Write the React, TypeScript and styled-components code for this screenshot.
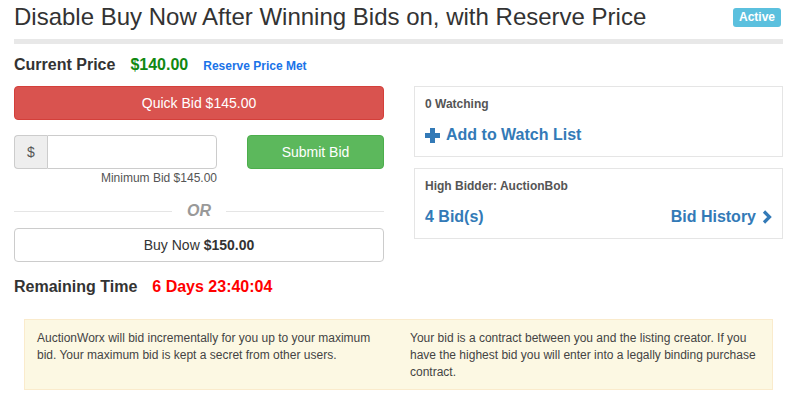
import React from 'react'
import styled, { createGlobalStyle } from 'styled-components'

const GlobalStyle = createGlobalStyle`
    body {
        margin: 0;
        background: #fff;
        font-family: "Liberation Sans", Arial, sans-serif;
        color: #333;
    }
`

const App = () => {
    return (
        <>
        <GlobalStyle />
        <Page>
            <Header>
                <Title>Disable Buy Now After Winning Bids on, with Reserve Price</Title>
                <Badge>Active</Badge>
            </Header>
            <PriceRow>
                <Label>Current Price</Label>
                <Price>$140.00</Price>
                <Reserve>Reserve Price Met</Reserve>
            </PriceRow>
            <Columns>
                <Left>
                    <Button variant="danger">Quick Bid $145.00</Button>
                    <BidRow>
                        <BidInput>
                            <InputGroup>
                                <Addon>$</Addon>
                                <Input type="text" />
                            </InputGroup>
                            <Hint>Minimum Bid $145.00</Hint>
                        </BidInput>
                        <SubmitWrap>
                            <Button variant="success">Submit Bid</Button>
                        </SubmitWrap>
                    </BidRow>
                    <Divider>
                        <Line />
                        <Or>OR</Or>
                        <Line />
                    </Divider>
                    <Button variant="default">Buy Now <b>$150.00</b></Button>
                    <TimeRow>
                        <Label>Remaining Time</Label>
                        <Countdown>6 Days 23:40:04</Countdown>
                    </TimeRow>
                </Left>
                <Right>
                    <Panel>
                        <Small>0 Watching</Small>
                        <LinkRow>
                            <BigLink>
                                <svg width="15" height="15" viewBox="0 0 15 15">
                                    <rect x="5" y="0" width="5" height="15" fill="#337ab7" />
                                    <rect x="0" y="5" width="15" height="5" fill="#337ab7" />
                                </svg>
                                Add to Watch List
                            </BigLink>
                        </LinkRow>
                    </Panel>
                    <Panel>
                        <Small>High Bidder: AuctionBob</Small>
                        <LinkRow>
                            <BigLink>4 Bid(s)</BigLink>
                            <BigLink>
                                Bid History
                                <svg width="10" height="14" viewBox="0 0 10 14">
                                    <polyline points="2,1.5 7.5,7 2,12.5" fill="none" stroke="#337ab7" strokeWidth="3.2" />
                                </svg>
                            </BigLink>
                        </LinkRow>
                    </Panel>
                </Right>
            </Columns>
            <Alert>
                <AlertText>AuctionWorx will bid incrementally for you up to your maximum bid. Your maximum bid is kept a secret from other users.</AlertText>
                <AlertText>Your bid is a contract between you and the listing creator. If you have the highest bid you will enter into a legally binding purchase contract.</AlertText>
            </Alert>
        </Page>
        </>
    )
}

export default App

const Page = styled.div`
    width: 769px;
    padding: 0 17px 0 14px;
`

const Header = styled.div`
    display: flex;
    justify-content: space-between;
    align-items: flex-start;
    height: 39px;
    border-bottom: 5px solid #e8e8e8;
`

const Title = styled.h1`
    margin: 0;
    font-size: 24px;
    font-weight: normal;
    line-height: 34px;
    color: #333;
`

const Badge = styled.span`
    margin: 8px 2px 0 0;
    padding: 0 6px;
    height: 19px;
    line-height: 19px;
    border-radius: 3px;
    background: #5bc0de;
    color: #fff;
    font-size: 12px;
    font-weight: bold;
`

const PriceRow = styled.div`
    display: flex;
    align-items: baseline;
    height: 42px;
    line-height: 42px;
`

const Label = styled.span`
    font-size: 16px;
    font-weight: bold;
    color: #333;
`

const Price = styled.span`
    margin-left: 15px;
    font-size: 16px;
    font-weight: bold;
    color: #118811;
`

const Reserve = styled.span`
    margin-left: 15px;
    font-size: 12px;
    font-weight: bold;
    color: #1a73e8;
`

const Columns = styled.div`
    display: grid;
    grid-template-columns: 370px 369px;
    column-gap: 30px;
`

const Left = styled.div`
    display: flex;
    flex-direction: column;
`

const Right = styled.div`
    display: flex;
    flex-direction: column;
    gap: 11px;
`

const colors = {
    danger: { bg: '#d9534f', border: '#d43f3a', text: '#fff' },
    success: { bg: '#5cb85c', border: '#4cae4c', text: '#fff' },
    default: { bg: '#fff', border: '#ccc', text: '#333' },
}

const Button = styled.button<{ variant: 'danger' | 'success' | 'default' }>`
    width: 100%;
    height: 34px;
    border-radius: 4px;
    border: 1px solid ${p => colors[p.variant].border};
    background: ${p => colors[p.variant].bg};
    color: ${p => colors[p.variant].text};
    font-family: "Liberation Sans", Arial, sans-serif;
    font-size: 14px;
    cursor: pointer;
`

const BidRow = styled.div`
    display: flex;
    justify-content: space-between;
    margin-top: 15px;
`

const BidInput = styled.div`
    width: 203px;
    display: flex;
    flex-direction: column;
    align-items: flex-end;
`

const SubmitWrap = styled.div`
    width: 137px;
`

const InputGroup = styled.div`
    display: flex;
    width: 100%;
    height: 34px;
`

const Addon = styled.span`
    width: 32px;
    display: flex;
    align-items: center;
    justify-content: center;
    background: #eee;
    border: 1px solid #ccc;
    border-right: none;
    border-radius: 4px 0 0 4px;
    font-size: 14px;
    color: #555;
`

const Input = styled.input`
    flex: 1;
    min-width: 0;
    border: 1px solid #ccc;
    border-radius: 0 4px 4px 0;
    padding: 0 12px;
`

const Hint = styled.span`
    margin-top: 2px;
    font-size: 12px;
    line-height: 14px;
    color: #555;
`

const Divider = styled.div`
    display: flex;
    align-items: center;
    margin: 14px 0 5px;
    height: 24px;
    gap: 14px;
`

const Line = styled.div`
    flex: 1;
    height: 1px;
    background: #e5e5e5;
`

const Or = styled.span`
    width: 26px;
    text-align: center;
    font-size: 16px;
    font-style: italic;
    font-weight: bold;
    color: #999;
`

const TimeRow = styled.div`
    display: flex;
    align-items: baseline;
    margin-top: 12px;
    line-height: 26px;
    gap: 15px;
`

const Countdown = styled.span`
    font-size: 16px;
    font-weight: bold;
    color: #ff0000;
`

const Panel = styled.div`
    border: 1px solid #e5e5e5;
    padding: 10px 10px 13px;
    height: 71px;
    box-sizing: border-box;
`

const Small = styled.div`
    font-size: 12px;
    font-weight: bold;
    color: #555;
    line-height: 14px;
`

const LinkRow = styled.div`
    display: flex;
    justify-content: space-between;
    margin-top: 15px;
`

const BigLink = styled.a`
    display: flex;
    align-items: center;
    gap: 6px;
    font-size: 16px;
    font-weight: bold;
    color: #337ab7;
    line-height: 18px;
`

const Alert = styled.div`
    display: grid;
    grid-template-columns: 1fr 1fr;
    column-gap: 23px;
    margin: 19px 10px 0;
    padding: 10px 12px 8px;
    min-height: 71px;
    box-sizing: border-box;
    background: #fcf8e3;
    border: 1px solid #faebcc;
`

const AlertText = styled.p`
    margin: 0;
    font-size: 12px;
    line-height: 17px;
    color: #444;
`
